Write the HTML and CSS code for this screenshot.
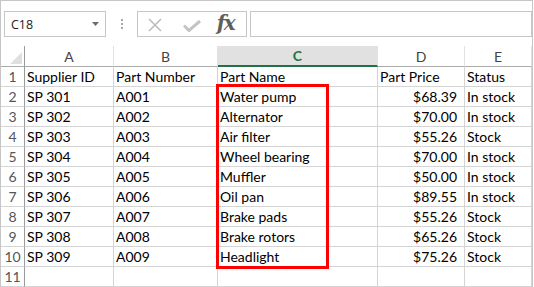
FILE: index.html
```html
<!DOCTYPE html>
<html>
<head>
<meta charset="utf-8">
<link rel="stylesheet" href="styles.css">
</head>
<body>
<div class="app">
  <div class="fbar">
    <div class="namebox">
      <span class="ref">C18</span>
      <svg class="caret" width="7" height="4" viewBox="0 0 7 4"><path d="M0 0H7L3.5 4Z" fill="#6d6d6d"/></svg>
    </div>
    <div class="grip">
      <svg width="2" height="10" viewBox="0 0 2 10"><rect x="0" y="0" width="2" height="2" fill="#a6a6a6"/><rect x="0" y="4" width="2" height="2" fill="#a6a6a6"/><rect x="0" y="8" width="2" height="2" fill="#a6a6a6"/></svg>
    </div>
    <div class="fbtns">
      <svg class="ic-x" width="14" height="14" viewBox="0 0 14 14"><path d="M1 1L13 13M13 1L1 13" stroke="#bdbdbd" stroke-width="1.6" fill="none"/></svg>
      <svg class="ic-ok" width="18" height="12" viewBox="0 0 18 12"><path d="M1 5.5L6 10.5L17 1" stroke="#c4c4c4" stroke-width="3" fill="none"/></svg>
      <span class="fx">fx</span>
    </div>
    <div class="formula"></div>
  </div>

  <table class="sheet">
    <colgroup>
      <col class="c-rh"><col class="c-a"><col class="c-b"><col class="c-c"><col class="c-d"><col class="c-e">
    </colgroup>
    <thead>
      <tr>
        <th class="corner"><span class="tri"></span></th>
        <th>A</th><th>B</th><th class="sel">C</th><th>D</th><th>E</th>
      </tr>
    </thead>
    <tbody>
      <tr><th>1</th><td>Supplier ID</td><td>Part Number</td><td>Part Name</td><td>Part Price</td><td>Status</td></tr>
      <tr><th>2</th><td>SP 301</td><td>A001</td><td>Water pump</td><td class="num">$68.39</td><td>In stock</td></tr>
      <tr><th>3</th><td>SP 302</td><td>A002</td><td>Alternator</td><td class="num">$70.00</td><td>In stock</td></tr>
      <tr><th>4</th><td>SP 303</td><td>A003</td><td>Air filter</td><td class="num">$55.26</td><td>Stock</td></tr>
      <tr><th>5</th><td>SP 304</td><td>A004</td><td>Wheel bearing</td><td class="num">$70.00</td><td>In stock</td></tr>
      <tr><th>6</th><td>SP 305</td><td>A005</td><td>Muffler</td><td class="num">$50.00</td><td>In stock</td></tr>
      <tr><th>7</th><td>SP 306</td><td>A006</td><td>Oil pan</td><td class="num">$89.55</td><td>In stock</td></tr>
      <tr><th>8</th><td>SP 307</td><td>A007</td><td>Brake pads</td><td class="num">$55.26</td><td>Stock</td></tr>
      <tr><th>9</th><td>SP 308</td><td>A008</td><td>Brake rotors</td><td class="num">$65.26</td><td>Stock</td></tr>
      <tr><th>10</th><td>SP 309</td><td>A009</td><td>Headlight</td><td class="num">$75.26</td><td>Stock</td></tr>
      <tr><th>11</th><td></td><td></td><td></td><td></td><td></td></tr>
    </tbody>
  </table>

  <div class="highlight"></div>
</div>
</body>
</html>
```

FILE: styles.css
```css
* { box-sizing: border-box; }
html, body { margin: 0; padding: 0; background: #ffffff; }
body { font-family: Lato, "Liberation Sans", sans-serif; }

.app {
  position: relative;
  width: 533px;
  border: 1px solid #c6c6c6;
  background: #ffffff;
}

.fbar {
  display: flex;
  align-items: stretch;
  padding: 10px 0 9px 3px;
  height: 45px;
}

.namebox {
  width: 102px;
  border: 1px solid #c6c6c6;
  display: flex;
  align-items: center;
  justify-content: space-between;
  padding: 0 6px 0 6px;
}
.namebox .ref {
  font-family: "Open Sans", "Liberation Sans", sans-serif;
  font-size: 12.5px;
  color: #222;
}
.namebox .caret { margin-bottom: 1px; }

.grip {
  width: 31px;
  display: flex;
  align-items: center;
  justify-content: center;
  padding-left: 1px;
}

.fbtns {
  width: 110px;
  border: 1px solid #c6c6c6;
  display: flex;
  align-items: center;
  padding-left: 10px;
}
.ic-x { margin-top: 1px; }
.ic-ok { margin-left: 21px; margin-top: 3px; }
.fx {
  margin-left: 16px;
  font-family: "DejaVu Serif", "Liberation Serif", serif;
  font-style: italic;
  font-weight: bold;
  font-size: 20px;
  color: #5e5e5e;
  letter-spacing: -1.5px;
  margin-top: -2px;
}

.formula {
  margin-left: 3px;
  width: 283px;
  border: 1px solid #c6c6c6;
}

.sheet {
  table-layout: fixed;
  border-collapse: separate;
  border-spacing: 0;
  width: 531px;
  font-size: 14px;
}
.c-rh { width: 24px; }
.c-a { width: 89px; }
.c-b { width: 104px; }
.c-c { width: 160px; }
.c-d { width: 87px; }
.c-e { width: 67px; }

.sheet th, .sheet td {
  padding: 0;
  height: 20px;
  line-height: 18px;
  border-right: 1px solid #d4d4d4;
  border-bottom: 1px solid #d4d4d4;
  white-space: nowrap;
  overflow: hidden;
  vertical-align: bottom;
}

.sheet td {
  color: #000;
  padding-left: 2px;
  padding-bottom: 0;
  text-align: left;
}
.sheet td.num { text-align: right; padding-right: 7px; }

.sheet thead th {
  height: 21px;
  font-weight: normal;
  color: #444;
  text-align: center;
  border-right-color: #e1e1e1;
  border-bottom: 1px solid #ababab;
  line-height: 19px;
}
.sheet thead th.sel {
  background: #e1e1e1;
  color: #217346;
  font-weight: bold;
  border-bottom: 2px solid #217346;
  line-height: 18px;
}
.sheet thead th.corner {
  position: relative;
  border-right: 1px solid #9b9b9b;
}
.tri {
  position: absolute;
  right: 2px;
  bottom: 2px;
  width: 0;
  height: 0;
  border-left: 12px solid transparent;
  border-bottom: 12px solid #dfdfdf;
}

.sheet tbody th {
  font-weight: normal;
  color: #555;
  text-align: center;
  border-right: 1px solid #9b9b9b;
}

.highlight {
  position: absolute;
  left: 215px;
  top: 83px;
  width: 113px;
  height: 185px;
  border: 3px solid #ff0000;
  pointer-events: none;
}
```
